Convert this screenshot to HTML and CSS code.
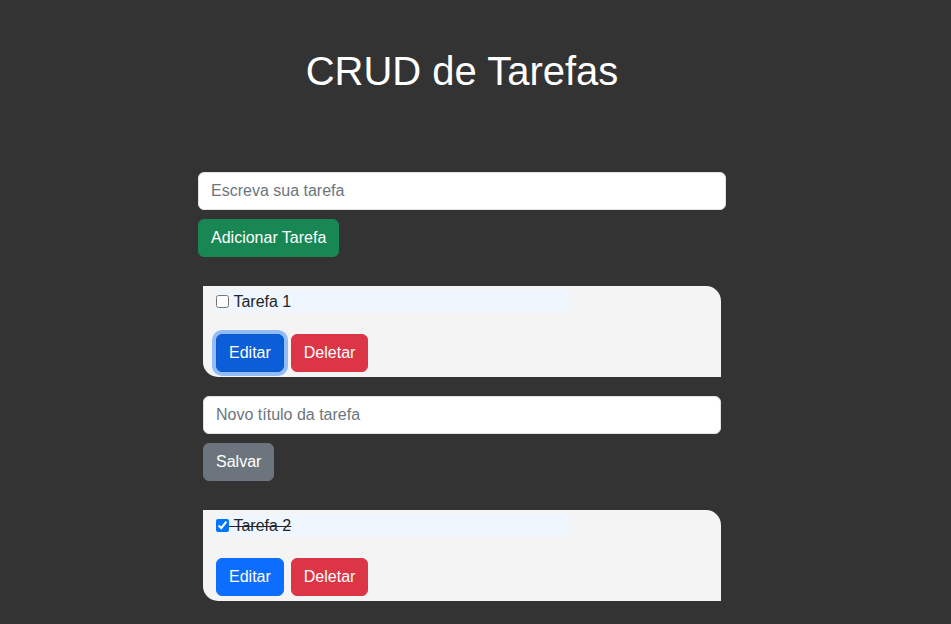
FILE: index.html
```html
<!DOCTYPE html>
<html lang="pt-BR">
<head>
<meta charset="utf-8">
<title>CRUD de Tarefas</title>
<link rel="stylesheet" href="styles.css">
</head>
<body>
<div class="app">
  <h1 class="title">CRUD de Tarefas</h1>
  <div class="container">
    <form class="add-form">
      <input class="field" type="text" placeholder="Escreva sua tarefa">
      <button type="button" class="btn btn-success">Adicionar Tarefa</button>
    </form>
    <ul class="task-list">
      <li class="task">
        <label class="task-label"><input type="checkbox" class="check"><span class="task-text">&nbsp;Tarefa 1</span></label>
        <div class="actions">
          <button type="button" class="btn btn-primary is-focused">Editar</button>
          <button type="button" class="btn btn-danger">Deletar</button>
        </div>
      </li>
      <li class="edit-form">
        <input class="field" type="text" placeholder="Novo título da tarefa">
        <button type="button" class="btn btn-secondary">Salvar</button>
      </li>
      <li class="task">
        <label class="task-label"><input type="checkbox" class="check" checked><span class="task-text done">&nbsp;Tarefa 2</span></label>
        <div class="actions">
          <button type="button" class="btn btn-primary">Editar</button>
          <button type="button" class="btn btn-danger">Deletar</button>
        </div>
      </li>
    </ul>
  </div>
</div>
</body>
</html>
```
FILE: styles.css
```css
* { box-sizing: border-box; }

html, body {
  margin: 0;
  padding: 0;
  background: #333333;
  font-family: "Liberation Sans", Arial, sans-serif;
  color: #212529;
}

.app {
  width: 924px;
}

.title {
  margin: 47px 0 77px;
  font-size: 40px;
  line-height: 48px;
  font-weight: 400;
  color: #ffffff;
  text-align: center;
}

.container {
  width: 528px;
  margin: 0 auto;
}

.add-form {
  display: flex;
  flex-direction: column;
  align-items: flex-start;
  gap: 9px;
  margin: 0;
}

.field {
  display: block;
  width: 100%;
  height: 38px;
  padding: 6px 12px;
  font-family: inherit;
  font-size: 16px;
  line-height: 24px;
  color: #212529;
  background: #ffffff;
  border: 1px solid #dee2e6;
  border-radius: 6px;
  outline: none;
}

.field::placeholder {
  color: #6c757d;
  opacity: 1;
}

.btn {
  display: inline-block;
  height: 38px;
  padding: 6px 12px;
  font-family: inherit;
  font-size: 16px;
  line-height: 24px;
  color: #ffffff;
  border: 1px solid transparent;
  border-radius: 6px;
  cursor: pointer;
}

.btn-success { background: #198754; border-color: #198754; }
.btn-primary { background: #0d6efd; border-color: #0d6efd; }
.btn-danger { background: #dc3545; border-color: #dc3545; }
.btn-secondary { background: #6c757d; border-color: #6c757d; }

.btn-primary.is-focused {
  background: #0b5ed7;
  border-color: #0a58ca;
  box-shadow: 0 0 0 4px rgba(49, 132, 253, 0.5);
}

.task-list {
  list-style: none;
  margin: 29px 5px 0;
  padding: 0;
}

.task {
  background: #f4f4f4;
  border-radius: 0 15px 0 15px;
  padding: 4px 13px 5px;
}

.task-label {
  display: flex;
  align-items: center;
  width: 353px;
  height: 23px;
  background: #f0f6fd;
  font-size: 16px;
}

.check {
  width: 13px;
  height: 13px;
  margin: 0;
}

.task-text {
  white-space: pre;
}

.task-text.done {
  text-decoration: line-through;
}

.actions {
  display: flex;
  gap: 7px;
  margin-top: 21px;
}

.edit-form {
  display: flex;
  flex-direction: column;
  align-items: flex-start;
  gap: 9px;
  margin: 19px 0 29px;
}
```
